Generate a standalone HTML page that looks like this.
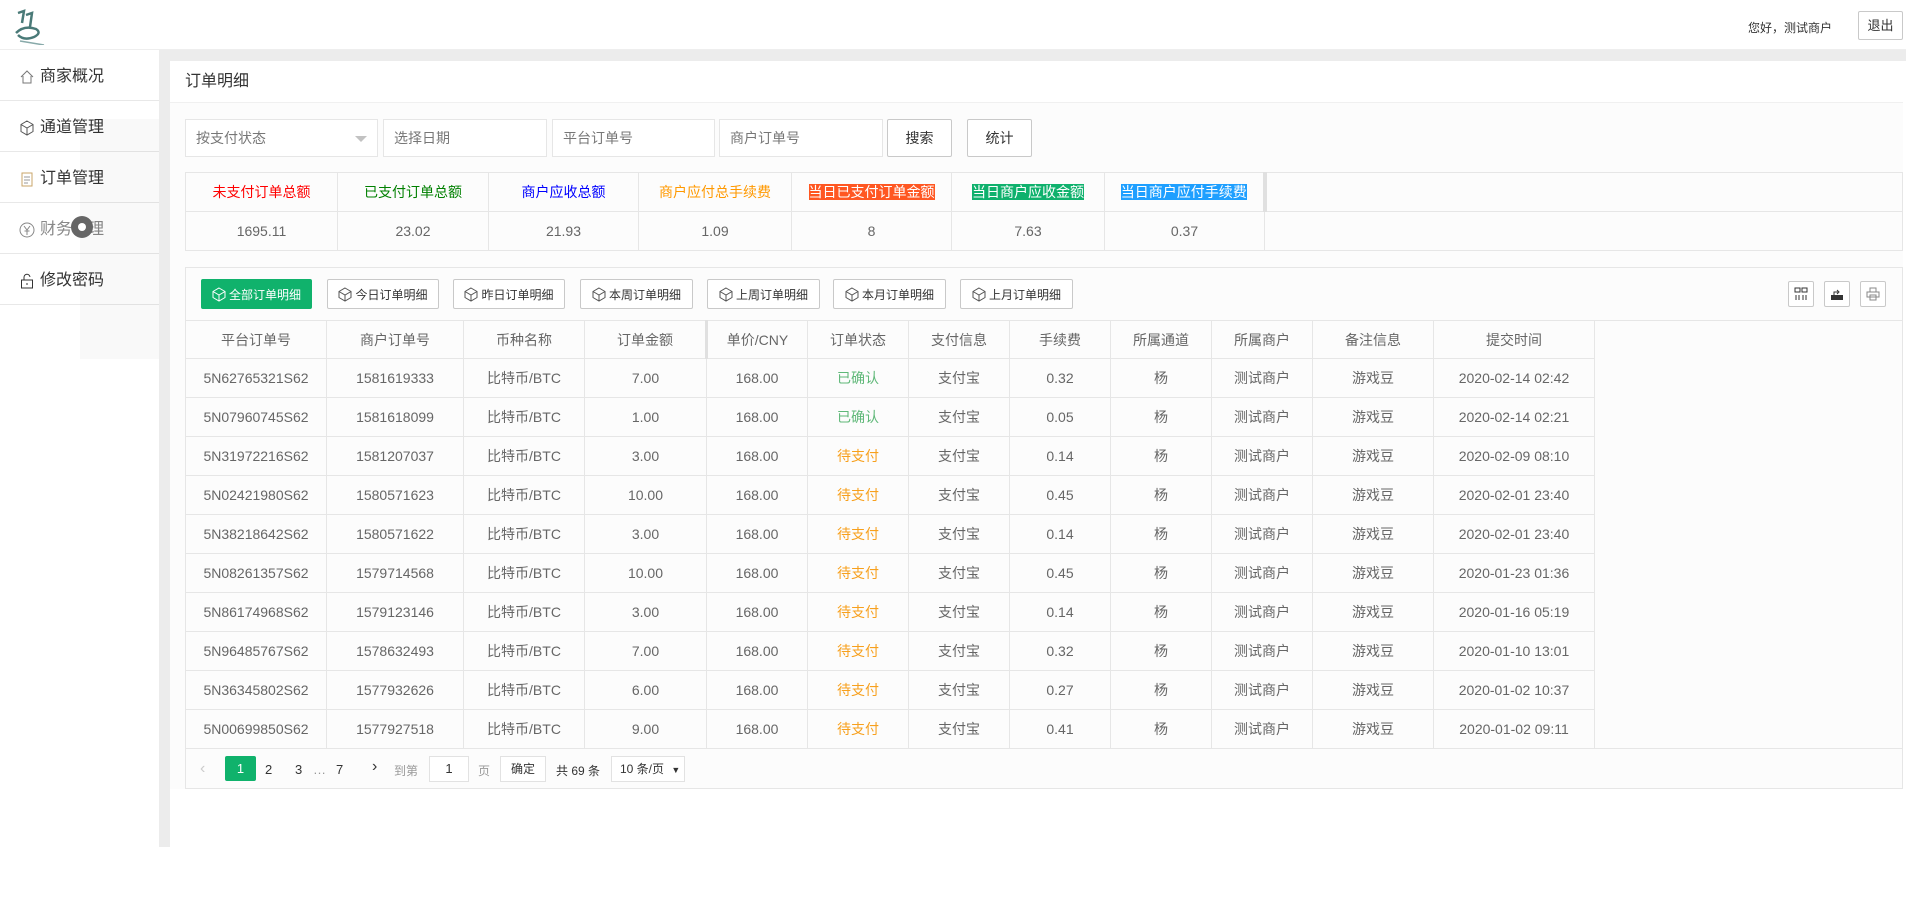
<!DOCTYPE html>
<html><head><meta charset="utf-8">
<style>
*{margin:0;padding:0;box-sizing:border-box}
body{width:1906px;height:924px;background:#fff;font-family:"Liberation Sans","Noto Sans CJK SC",sans-serif;color:#666;position:relative;overflow:hidden;font-size:14px}
.abs{position:absolute}
.hdr{left:0;top:0;width:1906px;height:50px;background:#fff;border-bottom:1px solid #eee}
.gray{background:#ececec}
.side{left:0;top:50px;width:159px}
.side div{height:51px;border-bottom:1px solid #e8e8e8;font-size:16px;color:#333;line-height:51px;padding-left:19px;padding-top:3px;display:flex;align-items:center;gap:5px}
.panel{background:#fcfcfc}
.inp{position:absolute;top:119px;height:38px;border:1px solid #e6e6e6;background:#fff;color:#777;font-size:14px;line-height:36px;padding-left:10px}
.btn{position:absolute;border:1px solid #c9c9c9;background:#fff;color:#333;text-align:center;border-radius:2px}
table{border-collapse:collapse;position:absolute;table-layout:fixed}
td{border:1px solid #e6e6e6;text-align:center;font-size:14px;color:#666;overflow:hidden;white-space:nowrap}
.tb{position:absolute;top:279px;height:30px;border:1px solid #c9c9c9;background:#fff;font-size:12px;color:#333;display:flex;align-items:center;justify-content:center;gap:3px;border-radius:2px}
.ok{color:#5fb878}.pd{color:#f7a01d}
</style></head><body>
<div class="abs hdr"></div>
<svg class="abs" style="left:14px;top:7px" width="32" height="38" viewBox="0 0 32 38"><path d="M4 6 L10 4 L8 16 M12 8 L18 6 L16 20 M2 26 Q10 18 22 22 Q28 26 20 30 Q10 34 4 28" stroke="#4a7a78" stroke-width="2.5" fill="none"/><path d="M6 34 L30 38" stroke="#8aa" stroke-width="1.5"/></svg>
<div class="abs" style="left:1748px;top:19px;font-size:12px;color:#333">您好，测试商户</div>
<div class="btn" style="left:1858px;top:11px;width:45px;height:29px;line-height:27px;font-size:13px">退出</div>
<div class="abs gray" style="left:0;top:50px;width:1906px;height:11px"></div>
<div class="abs gray" style="left:159px;top:50px;width:11px;height:797px"></div>
<div class="abs side" style="background:#fff">
<div><svg width="16" height="16" viewBox="0 0 16 16"><path d="M2 8 L8 2 L14 8 M4 7 V14 H12 V7" stroke="#777" fill="none"/></svg>商家概况</div>
<div><svg width="16" height="16" viewBox="0 0 16 16"><path d="M8 1 L14 4.5 V11.5 L8 15 L2 11.5 V4.5 Z M2 4.5 L8 8 L14 4.5 M8 8 V15" stroke="#555" fill="none"/></svg>通道管理</div>
<div><svg width="16" height="16" viewBox="0 0 16 16"><rect x="3" y="2" width="10" height="13" stroke="#c9a56a" fill="none"/><path d="M5 6H11M5 9H11M5 12H9" stroke="#999"/></svg>订单管理</div>
<div style="color:#888"><svg width="16" height="16" viewBox="0 0 16 16"><circle cx="8" cy="8" r="7" stroke="#888" fill="none"/><path d="M5 4L8 8L11 4M8 8V13M5.5 9H10.5" stroke="#888" fill="none"/></svg>财务管理</div>
<div><svg width="16" height="16" viewBox="0 0 16 16"><rect x="2.5" y="7" width="11" height="8" stroke="#333" fill="none"/><path d="M5 7V4.5A3 3 0 0 1 11 4" stroke="#333" fill="none"/><path d="M8 10V12" stroke="#333"/></svg>修改密码</div>
</div>
<div class="abs" style="left:80px;top:119px;width:79px;height:240px;background:rgba(0,0,0,0.025)"></div>
<div class="abs" style="left:71px;top:216px;width:22px;height:22px;border-radius:50%;background:#666"><div style="margin:7px;width:8px;height:8px;border-radius:50%;background:#fff"></div></div>
<div class="abs" style="left:170px;top:61px;width:1733px;height:42px;background:#fff;border-bottom:1px solid #f0f0f0;font-size:16px;color:#333;line-height:42px;padding-left:15px">订单明细</div>
<div class="abs panel" style="left:170px;top:103px;width:1733px;height:686px"></div>
<div class="inp" style="left:185px;width:193px">按支付状态<span style="position:absolute;right:10px;top:16px;border:6px solid transparent;border-top-color:#c2c2c2;border-bottom:0"></span></div>
<div class="inp" style="left:383px;width:164px">选择日期</div>
<div class="inp" style="left:552px;width:163px">平台订单号</div>
<div class="inp" style="left:719px;width:164px">商户订单号</div>
<div class="btn" style="left:887px;top:119px;width:65px;height:38px;line-height:36px;font-size:14px">搜索</div>
<div class="btn" style="left:967px;top:119px;width:65px;height:38px;line-height:36px;font-size:14px">统计</div>
<table style="left:185px;top:172px;width:1718px;background:#fcfcfc">
<colgroup><col style="width:152px"><col style="width:151px"><col style="width:150px"><col style="width:153px"><col style="width:160px"><col style="width:153px"><col style="width:160px"><col></colgroup>
<tr style="height:39px;font-size:14px"><td style="color:#f00">未支付订单总额</td><td style="color:#008000">已支付订单总额</td><td style="color:#00f">商户应收总额</td><td style="color:#f90">商户应付总手续费</td><td><span style="background:#ff5722;color:#fff">当日已支付订单金额</span></td><td><span style="background:#0fb16d;color:#fff">当日商户应收金额</span></td><td><span style="background:#1e9fff;color:#fff">当日商户应付手续费</span></td><td style="border-left:4px solid #e0e0e0"></td></tr>
<tr style="height:39px"><td>1695.11</td><td>23.02</td><td>21.93</td><td>1.09</td><td>8</td><td>7.63</td><td>0.37</td><td></td></tr>
</table>
<div class="abs" style="left:185px;top:267px;width:1718px;height:522px;border:1px solid #e6e6e6;background:#fcfcfc"></div>
<div class="tb" style="left:201px;width:111px;background:#10b26c;border-color:#10b26c;color:#fff"><svg width="14" height="15" viewBox="0 0 14 15"><path d="M7 1 L13 4.5 V10.5 L7 14 L1 10.5 V4.5 Z M1 4.5 L7 8 L13 4.5 M7 8 V14" stroke="#fff" fill="none"/></svg>全部订单明细</div>
<div class="tb" style="left:327px;width:112px"><svg width="14" height="15" viewBox="0 0 14 15"><path d="M7 1 L13 4.5 V10.5 L7 14 L1 10.5 V4.5 Z M1 4.5 L7 8 L13 4.5 M7 8 V14" stroke="#555" fill="none"/></svg>今日订单明细</div>
<div class="tb" style="left:453px;width:112px"><svg width="14" height="15" viewBox="0 0 14 15"><path d="M7 1 L13 4.5 V10.5 L7 14 L1 10.5 V4.5 Z M1 4.5 L7 8 L13 4.5 M7 8 V14" stroke="#555" fill="none"/></svg>昨日订单明细</div>
<div class="tb" style="left:580px;width:113px"><svg width="14" height="15" viewBox="0 0 14 15"><path d="M7 1 L13 4.5 V10.5 L7 14 L1 10.5 V4.5 Z M1 4.5 L7 8 L13 4.5 M7 8 V14" stroke="#555" fill="none"/></svg>本周订单明细</div>
<div class="tb" style="left:707px;width:113px"><svg width="14" height="15" viewBox="0 0 14 15"><path d="M7 1 L13 4.5 V10.5 L7 14 L1 10.5 V4.5 Z M1 4.5 L7 8 L13 4.5 M7 8 V14" stroke="#555" fill="none"/></svg>上周订单明细</div>
<div class="tb" style="left:833px;width:113px"><svg width="14" height="15" viewBox="0 0 14 15"><path d="M7 1 L13 4.5 V10.5 L7 14 L1 10.5 V4.5 Z M1 4.5 L7 8 L13 4.5 M7 8 V14" stroke="#555" fill="none"/></svg>本月订单明细</div>
<div class="tb" style="left:960px;width:113px"><svg width="14" height="15" viewBox="0 0 14 15"><path d="M7 1 L13 4.5 V10.5 L7 14 L1 10.5 V4.5 Z M1 4.5 L7 8 L13 4.5 M7 8 V14" stroke="#555" fill="none"/></svg>上月订单明细</div>
<div class="tb" style="left:1788px;width:26px;height:26px;top:281px"><svg width="14" height="14" viewBox="0 0 14 14"><rect x="1" y="1" width="5" height="4" stroke="#333" fill="none"/><rect x="8" y="1" width="5" height="4" stroke="#333" fill="none"/><path d="M2 8V13M5 8V13M9 8V13M12 8V13" stroke="#333"/></svg></div>
<div class="tb" style="left:1824px;width:26px;height:26px;top:281px"><svg width="14" height="14" viewBox="0 0 14 14"><path d="M1 8H13V13H1Z" fill="#333"/><path d="M4 8V5H8M7 3L9 5L7 7" stroke="#333" fill="none"/></svg></div>
<div class="tb" style="left:1860px;width:26px;height:26px;top:281px"><svg width="14" height="14" viewBox="0 0 14 14"><path d="M4 5V1H10V5M1 5H13V10H1Z M4 8H10V13H4Z" stroke="#888" fill="#fff"/></svg></div>
<table style="left:185px;top:320px;width:1409px">
<colgroup><col style="width:141px"><col style="width:137px"><col style="width:121px"><col style="width:122px"><col style="width:101px"><col style="width:101px"><col style="width:101px"><col style="width:101px"><col style="width:101px"><col style="width:101px"><col style="width:121px"><col style="width:161px"></colgroup>
<tr style="height:38px"><td>平台订单号</td><td>商户订单号</td><td>币种名称</td><td style="border-right:3px solid #e0e0e0">订单金额</td><td>单价/CNY</td><td>订单状态</td><td>支付信息</td><td>手续费</td><td>所属通道</td><td>所属商户</td><td>备注信息</td><td>提交时间</td></tr>
<tr style="height:39px"><td>5N62765321S62</td><td>1581619333</td><td>比特币/BTC</td><td>7.00</td><td>168.00</td><td class="ok">已确认</td><td>支付宝</td><td>0.32</td><td>杨</td><td>测试商户</td><td>游戏豆</td><td>2020-02-14 02:42</td></tr>
<tr style="height:39px"><td>5N07960745S62</td><td>1581618099</td><td>比特币/BTC</td><td>1.00</td><td>168.00</td><td class="ok">已确认</td><td>支付宝</td><td>0.05</td><td>杨</td><td>测试商户</td><td>游戏豆</td><td>2020-02-14 02:21</td></tr>
<tr style="height:39px"><td>5N31972216S62</td><td>1581207037</td><td>比特币/BTC</td><td>3.00</td><td>168.00</td><td class="pd">待支付</td><td>支付宝</td><td>0.14</td><td>杨</td><td>测试商户</td><td>游戏豆</td><td>2020-02-09 08:10</td></tr>
<tr style="height:39px"><td>5N02421980S62</td><td>1580571623</td><td>比特币/BTC</td><td>10.00</td><td>168.00</td><td class="pd">待支付</td><td>支付宝</td><td>0.45</td><td>杨</td><td>测试商户</td><td>游戏豆</td><td>2020-02-01 23:40</td></tr>
<tr style="height:39px"><td>5N38218642S62</td><td>1580571622</td><td>比特币/BTC</td><td>3.00</td><td>168.00</td><td class="pd">待支付</td><td>支付宝</td><td>0.14</td><td>杨</td><td>测试商户</td><td>游戏豆</td><td>2020-02-01 23:40</td></tr>
<tr style="height:39px"><td>5N08261357S62</td><td>1579714568</td><td>比特币/BTC</td><td>10.00</td><td>168.00</td><td class="pd">待支付</td><td>支付宝</td><td>0.45</td><td>杨</td><td>测试商户</td><td>游戏豆</td><td>2020-01-23 01:36</td></tr>
<tr style="height:39px"><td>5N86174968S62</td><td>1579123146</td><td>比特币/BTC</td><td>3.00</td><td>168.00</td><td class="pd">待支付</td><td>支付宝</td><td>0.14</td><td>杨</td><td>测试商户</td><td>游戏豆</td><td>2020-01-16 05:19</td></tr>
<tr style="height:39px"><td>5N96485767S62</td><td>1578632493</td><td>比特币/BTC</td><td>7.00</td><td>168.00</td><td class="pd">待支付</td><td>支付宝</td><td>0.32</td><td>杨</td><td>测试商户</td><td>游戏豆</td><td>2020-01-10 13:01</td></tr>
<tr style="height:39px"><td>5N36345802S62</td><td>1577932626</td><td>比特币/BTC</td><td>6.00</td><td>168.00</td><td class="pd">待支付</td><td>支付宝</td><td>0.27</td><td>杨</td><td>测试商户</td><td>游戏豆</td><td>2020-01-02 10:37</td></tr>
<tr style="height:39px"><td>5N00699850S62</td><td>1577927518</td><td>比特币/BTC</td><td>9.00</td><td>168.00</td><td class="pd">待支付</td><td>支付宝</td><td>0.41</td><td>杨</td><td>测试商户</td><td>游戏豆</td><td>2020-01-02 09:11</td></tr>
</table>
<div class="abs" style="left:185px;top:748px;width:1718px;height:1px;background:#e6e6e6"></div>
<div class="abs" style="left:1594px;top:320px;width:309px;height:428px;border-top:1px solid #e6e6e6"></div>
<div class="abs" style="left:200px;top:760px;color:#ccc;font-size:16px">&lsaquo;</div>
<div class="abs" style="left:225px;top:756px;width:31px;height:25px;background:#10b26c;color:#fff;text-align:center;line-height:25px;font-size:13px;border-radius:2px">1</div>
<div class="abs" style="left:265px;top:762px;font-size:13px;color:#333">2</div>
<div class="abs" style="left:295px;top:762px;font-size:13px;color:#333">3</div>
<div class="abs" style="left:313px;top:762px;font-size:13px;color:#999">…</div>
<div class="abs" style="left:336px;top:762px;font-size:13px;color:#333">7</div>
<div class="abs" style="left:372px;top:758px;font-size:16px;color:#333">&rsaquo;</div>
<div class="abs" style="left:394px;top:762px;font-size:12px;color:#999">到第</div>
<div class="abs" style="left:429px;top:756px;width:40px;height:26px;border:1px solid #e2e2e2;background:#fff;text-align:center;line-height:24px;font-size:13px;color:#333">1</div>
<div class="abs" style="left:478px;top:762px;font-size:12px;color:#999">页</div>
<div class="abs" style="left:500px;top:756px;width:46px;height:26px;border:1px solid #e2e2e2;background:#fff;text-align:center;line-height:24px;font-size:12px;color:#333">确定</div>
<div class="abs" style="left:556px;top:762px;font-size:12px;color:#333">共 69 条</div>
<div class="abs" style="left:611px;top:756px;width:74px;height:26px;border:1px solid #e2e2e2;background:#fff;line-height:24px;font-size:12px;color:#333;padding-left:8px">10 条/页 <span style="font-size:9px;margin-left:4px">▼</span></div>
</body></html>
